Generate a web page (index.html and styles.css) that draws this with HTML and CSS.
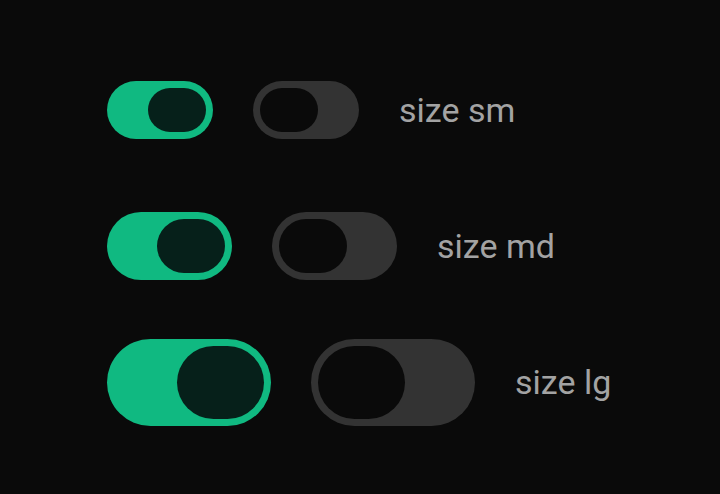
FILE: index.html
```html
<!DOCTYPE html>
<html>
<head>
<meta charset="utf-8">
<link rel="stylesheet" href="styles.css">
</head>
<body>
<main class="list">
  <div class="row">
    <span class="switch switch-sm is-on"><span class="thumb"></span></span>
    <span class="switch switch-sm"><span class="thumb"></span></span>
    <span class="label">size sm</span>
  </div>
  <div class="row">
    <span class="switch switch-md is-on"><span class="thumb"></span></span>
    <span class="switch switch-md"><span class="thumb"></span></span>
    <span class="label">size md</span>
  </div>
  <div class="row">
    <span class="switch switch-lg is-on"><span class="thumb"></span></span>
    <span class="switch switch-lg"><span class="thumb"></span></span>
    <span class="label">size lg</span>
  </div>
</main>
</body>
</html>
```
FILE: styles.css
```css
html, body {
  margin: 0;
  padding: 0;
  background: #0a0a0a;
  width: 720px;
  height: 494px;
  overflow: hidden;
  font-family: Roboto, "Noto Sans", sans-serif;
}
.list {
  display: grid;
  grid-template-rows: repeat(3, 136px);
  padding: 42px 0 0 107px;
}
.row {
  display: flex;
  align-items: center;
  gap: 40px;
}
.switch {
  display: flex;
  align-items: center;
  box-sizing: border-box;
  padding: 7px;
  border-radius: 999px;
  background: #333333;
  flex: none;
}
.switch.is-on {
  background: #10b981;
  justify-content: flex-end;
}
.thumb {
  display: block;
  border-radius: 999px;
  background: #0a0a0a;
}
.is-on .thumb {
  background: #06201a;
}
.switch-sm { width: 106px; height: 58px; }
.switch-sm .thumb { width: 58px; height: 44px; }
.switch-md { width: 125px; height: 68px; }
.switch-md .thumb { width: 68px; height: 54px; }
.switch-lg { width: 164px; height: 87px; }
.switch-lg .thumb { width: 87px; height: 73px; }
.label {
  color: #a3a3a3;
  font-size: 34px;
  line-height: 1;
}
```
